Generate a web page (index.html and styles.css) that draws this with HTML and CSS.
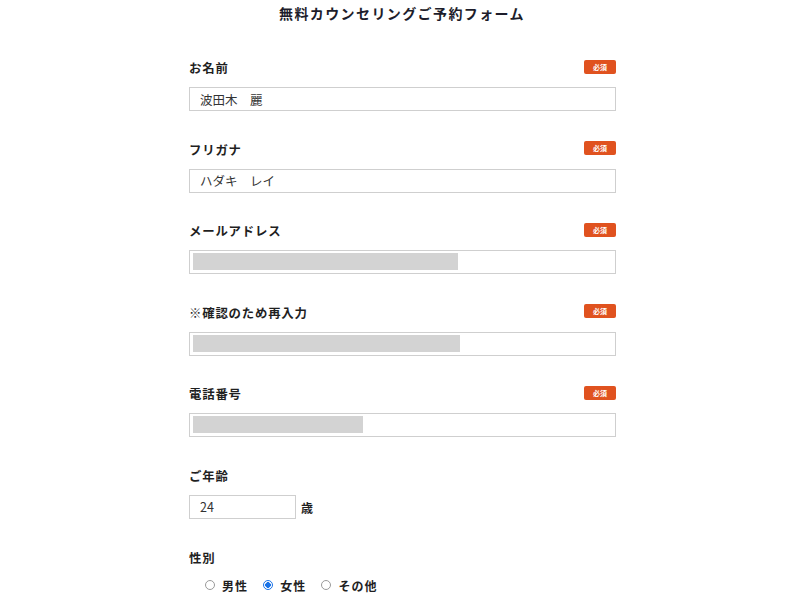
FILE: index.html
```html
<!DOCTYPE html>
<html lang="ja">
<head>
<meta charset="utf-8">
<link rel="stylesheet" href="styles.css">
</head>
<body>
<h1 class="title">無料カウンセリングご予約フォーム</h1>
<div class="form">
  <div class="group">
    <div class="label-row"><span class="label">お名前</span><span class="badge">必須</span></div>
    <div class="field"><span class="value">波田木　麗</span></div>
  </div>
  <div class="group">
    <div class="label-row"><span class="label">フリガナ</span><span class="badge">必須</span></div>
    <div class="field"><span class="value">ハダキ　レイ</span></div>
  </div>
  <div class="group">
    <div class="label-row"><span class="label">メールアドレス</span><span class="badge">必須</span></div>
    <div class="field masked"><span class="blur" style="width:265px"></span></div>
  </div>
  <div class="group">
    <div class="label-row"><span class="label">※確認のため再入力</span><span class="badge">必須</span></div>
    <div class="field masked"><span class="blur" style="width:267px"></span></div>
  </div>
  <div class="group">
    <div class="label-row"><span class="label">電話番号</span><span class="badge">必須</span></div>
    <div class="field masked"><span class="blur" style="width:170px"></span></div>
  </div>
  <div class="group">
    <div class="label-row"><span class="label">ご年齢</span></div>
    <div class="age-row"><div class="field age"><span class="value">24</span></div><span class="unit">歳</span></div>
  </div>
  <div class="group">
    <div class="label-row"><span class="label">性別</span></div>
    <div class="radios">
      <span class="radio"><span class="dot"></span>男性</span>
      <span class="radio"><span class="dot checked"></span>女性</span>
      <span class="radio"><span class="dot"></span>その他</span>
    </div>
  </div>
</div>
</body>
</html>
```

FILE: styles.css
```css
* { box-sizing: border-box; }
body {
  margin: 0;
  background: #fff;
  font-family: "Noto Sans CJK JP", "Noto Sans", sans-serif;
  color: #222;
}
.title {
  margin: 0;
  padding-top: 3px;
  padding-left: 4px;
  height: 40px;
  text-align: center;
  font-size: 14px;
  font-weight: 700;
  letter-spacing: 1.4px;
  line-height: 20px;
  color: #1d1d2b;
}
.form {
  width: 427px;
  margin-left: 189px;
  padding-top: 18px;
}
.group {
  margin-bottom: 28.6px;
}
.label-row {
  display: flex;
  justify-content: space-between;
  align-items: center;
  height: 20px;
  margin-bottom: 9px;
}
.label {
  font-size: 12.4px;
  font-weight: 700;
  letter-spacing: 0.8px;
  color: #1f1f1f;
}
.badge {
  width: 32px;
  height: 14px;
  background: #e0521f;
  border-radius: 2px;
  color: #fff;
  font-size: 7px;
  font-weight: 700;
  line-height: 14px;
  text-align: center;
  margin-top: -3px;
}
.field {
  height: 24px;
  border: 1px solid #cfcfcf;
  display: flex;
  align-items: center;
  padding-left: 10px;
}
.value {
  font-size: 12.5px;
  color: #333;
}
.masked {
  padding: 0 3px;
  align-items: flex-start;
  padding-top: 2px;
}
.blur {
  display: block;
  height: 17px;
  background: #d3d3d3;
}
.age-row {
  display: flex;
  align-items: center;
  gap: 5px;
}
.field.age {
  width: 107px;
}
.unit {
  font-size: 12px;
  font-weight: 700;
  color: #1f1f1f;
  margin-top: 1px;
}
.radios {
  display: flex;
  gap: 15px;
  padding-left: 16px;
  padding-top: 0;
}
.radio {
  display: flex;
  align-items: center;
  gap: 7px;
  font-size: 12px;
  font-weight: 700;
  letter-spacing: 1.1px;
  color: #1f1f1f;
}
.dot {
  width: 10px;
  height: 10px;
  border-radius: 50%;
  border: 1px solid #9a9a9a;
  background: #fff;
}
.dot.checked {
  border: 1px solid #1a73e8;
  background: radial-gradient(circle, #1a73e8 0 2.6px, #fff 3px);
}
```
